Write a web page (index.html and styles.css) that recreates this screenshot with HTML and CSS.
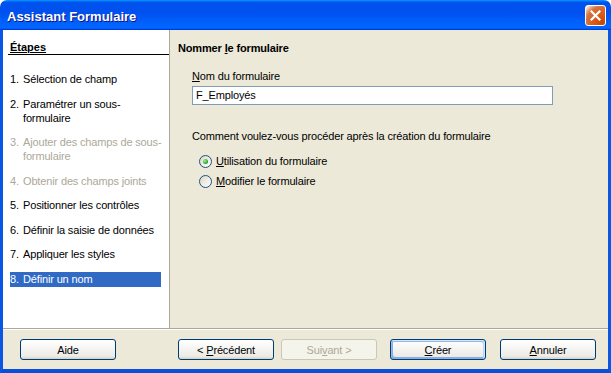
FILE: index.html
```html
<!DOCTYPE html>
<html lang="fr">
<head>
  <meta charset="UTF-8" />
  <title>Assistant Formulaire</title>
  <link rel="stylesheet" href="styles.css">
</head>
<body>

  <div class="window">

    <!-- Title bar -->
    <div class="titlebar">
      <span class="title">Assistant Formulaire</span>
      <span class="close">
        <svg width="11" height="11" viewBox="0 0 11 11">
          <path d="M1.5 1.5 L9.5 9.5 M9.5 1.5 L1.5 9.5" stroke="#fff" stroke-width="2.2" stroke-linecap="square" fill="none"/>
        </svg>
      </span>
    </div>

    <div class="frame">
      <div class="main">

        <!-- Steps -->
        <div class="steps">
          <div class="steps-head">Étapes</div>
          <ul class="step-list">
            <li class="step"><span class="num">1.</span><span>Sélection de champ</span></li>
            <li class="step"><span class="num">2.</span><span>Paramétrer un sous-<br>formulaire</span></li>
            <li class="step off"><span class="num">3.</span><span>Ajouter des champs de sous-<br>formulaire</span></li>
            <li class="step off"><span class="num">4.</span><span>Obtenir des champs joints</span></li>
            <li class="step"><span class="num">5.</span><span>Positionner les contrôles</span></li>
            <li class="step"><span class="num">6.</span><span>Définir la saisie de données</span></li>
            <li class="step"><span class="num">7.</span><span>Appliquer les styles</span></li>
            <li class="step current"><span class="num">8.</span><span>Définir un nom</span></li>
          </ul>
        </div>

        <!-- Page -->
        <div class="page">
          <div class="page-title">Nommer <u>l</u>e formulaire</div>
          <div class="group">
            <div class="label"><u>N</u>om du formulaire</div>
            <div class="field">F_Employés</div>
            <div class="question">Comment voulez-vous procéder après la création du formulaire</div>
            <div class="radios">
              <div class="radio-row"><span class="radio checked"></span><span><u>U</u>tilisation du formulaire</span></div>
              <div class="radio-row"><span class="radio"></span><span><u>M</u>odifier le formulaire</span></div>
            </div>
          </div>
        </div>

      </div>

      <div class="rule"></div>

      <!-- Buttons -->
      <div class="buttons">
        <span class="btn help">Aide</span>
        <span class="btn prev">&lt; <u>P</u>récédent</span>
        <span class="btn next disabled">Sui<u>v</u>ant &gt;</span>
        <span class="btn create default"><u>C</u>réer</span>
        <span class="btn cancel"><u>A</u>nnuler</span>
      </div>
    </div>

  </div>

</body>
</html>
```

FILE: styles.css
```css
body {
  margin: 0;
  padding: 0;
  background-color: #ffffff;
  font-family: "Liberation Sans", Arial, sans-serif;
  font-size: 11px;
  letter-spacing: -0.15px;
  color: #000;
}

.window {
  width: 611px;
  height: 373px;
  display: flex;
  flex-direction: column;
}

/* title bar */
.titlebar {
  height: 30px;
  flex-shrink: 0;
  display: flex;
  align-items: center;
  justify-content: space-between;
  padding: 0 5px 0 7px;
  box-sizing: border-box;
  border-radius: 7px 7px 0 0;
  background: linear-gradient(180deg, #0997ff, #0053ee 8%, #0050ee 40%, #0066ff 88%, #0066ff 93%, #005bff 95%, #003dd7 96%, #003dd7);
}

.title {
  font-weight: bold;
  font-size: 13px;
  letter-spacing: 0;
  color: #fff;
  text-shadow: 1px 1px #0f1089;
  padding-top: 2px;
}

.close {
  width: 21px;
  height: 21px;
  box-sizing: border-box;
  border: 1px solid #fff;
  border-radius: 3px;
  display: flex;
  align-items: center;
  justify-content: center;
  margin-top: 1px;
  background: radial-gradient(circle at 90% 90%, #cc4600 0%, #dc6527 55%, #cd7546 70%, #ffccb2 90%, #fff 100%);
}

/* frame */
.frame {
  flex: 1;
  display: flex;
  flex-direction: column;
  background-color: #ece9d8;
  border-left: 3px solid #0a57e6;
  border-right: 3px solid #0a57e6;
  border-bottom: 4px solid #0a4fdc;
}

.main {
  height: 298px;
  display: flex;
}

.steps {
  width: 166px;
  background-color: #fff;
  border-right: 1px solid #aca899;
}

.steps-head {
  margin: 11px 0 0 5px;
  padding-left: 2px;
  line-height: 13px;
  font-weight: bold;
  letter-spacing: 0;
  text-decoration: underline;
  border-bottom: 1px solid #000;
}

.step-list {
  list-style: none;
  margin: 17px 0 0 7px;
  padding: 0;
  width: 151px;
  display: flex;
  flex-direction: column;
  gap: 10.5px;
}

.step {
  display: flex;
  line-height: 14px;
  white-space: nowrap;
}

.step .num {
  width: 13px;
  flex-shrink: 0;
}

.step.off {
  color: #aca899;
}

.step.current {
  background-color: #316ac5;
  color: #fff;
  line-height: 15px;
}

/* page */
.page {
  flex: 1;
  padding: 11px 8px;
}

.page-title {
  font-weight: bold;
  line-height: 14px;
}

.group {
  padding-left: 14px;
}

.label {
  margin-top: 14px;
  line-height: 14px;
}

.field {
  margin-top: 3px;
  width: 361px;
  height: 19px;
  box-sizing: border-box;
  border: 1px solid #7f9db9;
  background-color: #fff;
  padding-left: 3px;
  line-height: 17px;
}

.question {
  margin-top: 24px;
  line-height: 14px;
}

.radios {
  margin-top: 8px;
}

.radio-row {
  height: 20px;
  display: flex;
  align-items: center;
  gap: 4px;
  padding-left: 7px;
}

.radio {
  width: 13px;
  height: 13px;
  box-sizing: border-box;
  border-radius: 50%;
  border: 1px solid #1c5180;
  background: linear-gradient(135deg, #dcd9c8, #fff);
  display: flex;
  align-items: center;
  justify-content: center;
}

.radio.checked::after {
  content: "";
  width: 5px;
  height: 5px;
  border-radius: 50%;
  background: radial-gradient(circle at 35% 35%, #a0f0a0, #21a121 70%);
}

/* bottom */
.rule {
  height: 1px;
  background-color: #aca899;
  border-bottom: 1px solid #fff;
}

.buttons {
  flex: 1;
  display: flex;
  align-items: flex-start;
  padding-top: 9px;
}

.btn {
  width: 96px;
  height: 21px;
  box-sizing: border-box;
  border: 1px solid #003c74;
  border-radius: 3px;
  background: linear-gradient(180deg, #fff, #ecebe6 86%, #d6d0c5);
  display: flex;
  align-items: center;
  justify-content: center;
  white-space: pre;
}

.help { margin-left: 17px; }
.prev { margin-left: 62px; }
.next { margin-left: 7px; }
.create { margin-left: 13px; }
.cancel { margin-left: 14px; }

.btn.disabled {
  background: #f5f4ea;
  border-color: #c9c7ba;
  color: #aca899;
}

.btn.default {
  box-shadow: inset -1px 1px #cee7ff, inset 1px 2px #98b8ea, inset -2px 2px #bcd4f6, inset 1px -1px #89ade4, inset 2px -2px #89ade4;
}
```
